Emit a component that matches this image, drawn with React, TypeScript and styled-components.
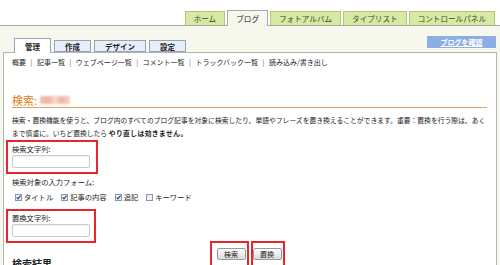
import React from 'react';
import styled, { createGlobalStyle } from 'styled-components';

const GlobalStyle = createGlobalStyle`
  html, body {
    margin: 0;
    padding: 0;
    background: #ffffff;
  }
  body {
    font-family: "Noto Sans CJK JP", "Noto Sans", sans-serif;
  }
`;

const Page = styled.div`
  width: 500px;
  height: 265px;
  overflow: hidden;
  display: flex;
  flex-direction: column;
  background: #f6f8ee;
  font-size: 7px;
  color: #222;
`;

const TopBar = styled.div`
  height: 25px;
  flex-shrink: 0;
  background: #fff;
  border-bottom: 1px solid #a9a9a9;
  display: flex;
  justify-content: flex-end;
  align-items: flex-end;
  gap: 2px;
  padding-right: 5px;
`;

const MainTab = styled.div<{ $active?: boolean }>`
  height: ${({ $active }) => ($active ? 15 : 13)}px;
  padding: 0 8px;
  display: flex;
  align-items: center;
  justify-content: center;
  font-size: 7.6px;
  white-space: nowrap;
  border: 1px solid ${({ $active }) => ($active ? '#a9a9a9' : '#b3c57a')};
  border-bottom: none;
  background: ${({ $active }) => ($active ? '#f6f8ee' : '#d7e9a3')};
  color: ${({ $active }) => ($active ? '#222' : '#3d4a26')};
  margin-bottom: ${({ $active }) => ($active ? '-1px' : '0')};
`;

const SubHeader = styled.div`
  height: 26px;
  flex-shrink: 0;
  display: flex;
  align-items: flex-end;
  justify-content: space-between;
  padding: 0 4px 0 14px;
`;

const SubTabs = styled.div`
  display: flex;
  align-items: flex-end;
  gap: 3px;
`;

const SubTab = styled.div<{ $active?: boolean }>`
  position: relative;
  z-index: 1;
  height: ${({ $active }) => ($active ? 14 : 10)}px;
  padding: 0 10px;
  display: flex;
  align-items: center;
  justify-content: center;
  font-size: 7.5px;
  font-weight: bold;
  white-space: nowrap;
  color: #222;
  border: 1px solid #9aa3b2;
  border-bottom: ${({ $active }) => ($active ? 'none' : '1px solid #9aa3b2')};
  background: ${({ $active }) => ($active ? '#fff' : '#e6edfb')};
  margin-bottom: ${({ $active }) => ($active ? '-1px' : '0')};
`;

const ViewButton = styled.div`
  width: 69px;
  height: 12px;
  margin-bottom: 4px;
  display: flex;
  align-items: center;
  justify-content: center;
  background: #8daee5;
  color: #fff;
  font-size: 7px;
  font-weight: bold;
  text-decoration: underline;
`;

const Panel = styled.div`
  flex: 1;
  margin: 0 3px;
  background: #fff;
  border: 1px solid #b4b4b4;
  border-bottom: none;
  padding: 3px 9px 0 8px;
  display: flex;
  flex-direction: column;
  align-items: flex-start;
`;

const Nav = styled.div`
  line-height: 12px;
  white-space: nowrap;
`;

const Sep = styled.span`
  margin: 0 4.5px;
  color: #666;
`;

const Heading = styled.h2`
  align-self: stretch;
  margin: 25px 0 0;
  font-size: 11px;
  font-weight: normal;
  line-height: 14px;
  color: #e27b17;
  border-bottom: 1px solid #e3a265;
  display: flex;
  align-items: center;
`;

const BlurredName = styled.span`
  display: inline-block;
  width: 30px;
  height: 8px;
  margin-left: 3px;
  background: linear-gradient(90deg, #f2c2ad, #eeb29b 30%, #f8dcd0 50%, #efb5a0 70%, #f6d3c4);
  filter: blur(1px);
`;

const Description = styled.p`
  margin: 6px 0 0;
  font-size: 6.8px;
  line-height: 13px;
  white-space: nowrap;
`;

const Strong = styled.strong`
  letter-spacing: 0.4px;
`;

const FieldBox = styled.div<{ $width: number; $gap?: number }>`
  width: ${({ $width }) => $width}px;
  box-sizing: border-box;
  margin: ${({ $gap = 0 }) => $gap}px 0 0 -6px;
  border: 2px solid #e8252b;
  padding: 2px 0 4px 4px;
`;

const Label = styled.div`
  line-height: 10px;
  font-size: 7.3px;
`;

const TextInput = styled.input`
  display: block;
  box-sizing: border-box;
  width: 78px;
  height: 13px;
  margin: 1px 0 0;
  border: 1px solid #c9ccd2;
  border-radius: 2px;
  background: #fff;
  box-shadow: inset 0 1px 1px rgba(0, 0, 0, 0.06);
`;

const FormLabel = styled.div`
  margin-top: 2px;
  line-height: 12px;
  font-size: 7.3px;
`;

const CheckRow = styled.div`
  margin-top: 3px;
  padding-left: 3px;
  display: flex;
  align-items: center;
  gap: 8px;
  line-height: 12px;
  font-size: 7.3px;
`;

const CheckItem = styled.label`
  display: flex;
  align-items: center;
  gap: 2px;
`;

const ButtonRow = styled.div`
  align-self: stretch;
  margin-top: -2px;
  padding-right: 5px;
  display: flex;
  justify-content: center;
  gap: 2px;
`;

const ButtonMark = styled.div<{ $pl: number }>`
  border: 2px solid #e8252b;
  padding: 5px 1px 8px ${({ $pl }) => $pl}px;
`;

const ActionButton = styled.button`
  display: block;
  width: 29px;
  height: 12px;
  padding: 0;
  border: 1px solid #9a9a9a;
  border-radius: 2px;
  background: linear-gradient(#fbfbfb, #dcdcdc);
  font-family: inherit;
  font-size: 7px;
  color: #222;
`;

const ResultTitle = styled.h3`
  margin: -13px 0 0;
  font-size: 10px;
  line-height: 14px;
  font-weight: bold;
  color: #222;
`;

const CheckBox = ({ checked }: { checked: boolean }) => (
  <svg width="7" height="7" viewBox="0 0 7 7">
    <rect x="0.5" y="0.5" width="6" height="6" fill="#edf1f7" stroke="#8797b0" />
    {checked && (
      <path d="M1.6 3.4 L3 4.9 L5.5 1.7" fill="none" stroke="#21448a" strokeWidth="1.1" />
    )}
  </svg>
);

const mainTabs = ['ホーム', 'ブログ', 'フォトアルバム', 'タイプリスト', 'コントロールパネル'];
const subTabs = ['管理', '作成', 'デザイン', '設定'];
const navLinks = ['概要', '記事一覧', 'ウェブページ一覧', 'コメント一覧', 'トラックバック一覧', '読み込み/書き出し'];
const targets = [
  { label: 'タイトル', checked: true },
  { label: '記事の内容', checked: true },
  { label: '追記', checked: true },
  { label: 'キーワード', checked: false },
];

export default function App() {
  return (
    <Page>
      <GlobalStyle />
      <TopBar>
        {mainTabs.map((t) => (
          <MainTab key={t} $active={t === 'ブログ'}>
            {t}
          </MainTab>
        ))}
      </TopBar>
      <SubHeader>
        <SubTabs>
          {subTabs.map((t) => (
            <SubTab key={t} $active={t === '管理'}>
              {t}
            </SubTab>
          ))}
        </SubTabs>
        <ViewButton>ブログを確認</ViewButton>
      </SubHeader>
      <Panel>
        <Nav>
          {navLinks.map((l, i) => (
            <React.Fragment key={l}>
              {i > 0 && <Sep>|</Sep>}
              {l}
            </React.Fragment>
          ))}
        </Nav>
        <Heading>
          検索:
          <BlurredName />
        </Heading>
        <Description>
          検索・置換機能を使うと、ブログ内のすべてのブログ記事を対象に検索したり、単語やフレーズを置き換えることができます。重要：置換を行う際は、あく
          <br />
          まで慎重に。いちど置換したら <Strong>やり直しは効きません。</Strong>
        </Description>
        <FieldBox $width={92}>
          <Label>検索文字列:</Label>
          <TextInput type="text" />
        </FieldBox>
        <FormLabel>検索対象の入力フォーム:</FormLabel>
        <CheckRow>
          {targets.map((t) => (
            <CheckItem key={t.label}>
              <CheckBox checked={t.checked} />
              {t.label}
            </CheckItem>
          ))}
        </CheckRow>
        <FieldBox $width={90} $gap={6}>
          <Label>置換文字列:</Label>
          <TextInput type="text" />
        </FieldBox>
        <ButtonRow>
          <ButtonMark $pl={5}>
            <ActionButton>検索</ActionButton>
          </ButtonMark>
          <ButtonMark $pl={0}>
            <ActionButton>置換</ActionButton>
          </ButtonMark>
        </ButtonRow>
        <ResultTitle>検索結果</ResultTitle>
      </Panel>
    </Page>
  );
}
